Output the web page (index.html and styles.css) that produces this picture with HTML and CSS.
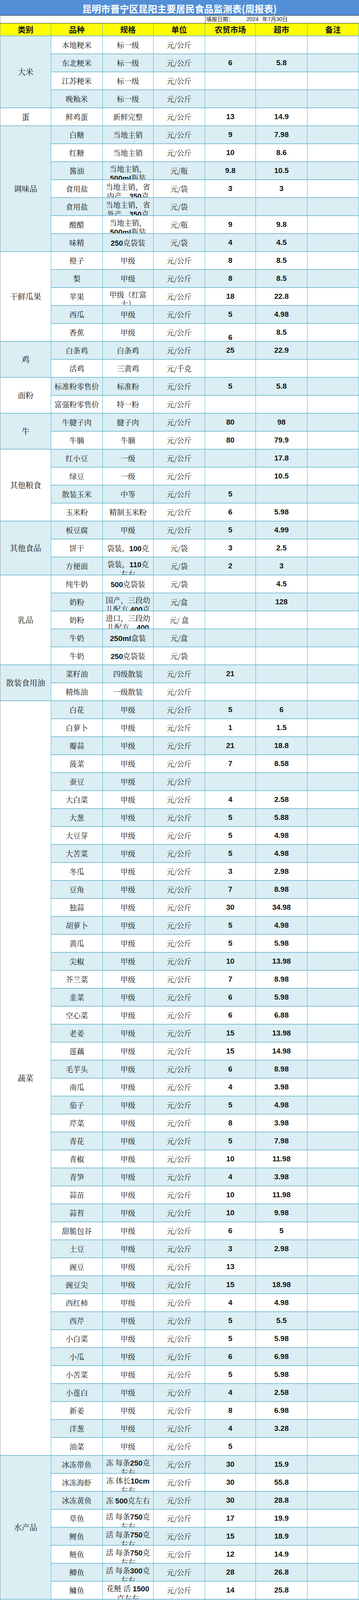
FILE: index.html
```html
<!DOCTYPE html>
<html lang="zh-CN">
<head>
<meta charset="utf-8">
<title>昆明市晋宁区昆阳主要居民食品监测表(周报表)</title>
<link rel="stylesheet" href="styles.css">
</head>
<body>
<div class="sheet">
  <div class="title">昆明市晋宁区昆阳主要居民食品监测表(周报表)</div>
  <div class="date">
    <div class="date-l"></div>
    <div class="date-r"><span>填报日期：</span><span class="yr">2024</span><span class="md">年7月30日</span></div>
  </div>
  <div class="g">
    <div class="r hd"><div>类别</div><div>品种</div><div>规格</div><div>单位</div><div>农贸市场</div><div>超市</div><div>备注</div></div>

    <div class="r w"><div class="k kb s4">大米</div><div>本地粳米</div><div>标一级</div><div>元/公斤</div><div class="n"></div><div class="n"></div><div></div></div>
    <div class="r b"><div>东北粳米</div><div>标一级</div><div>元/公斤</div><div class="n">6</div><div class="n">5.8</div><div></div></div>
    <div class="r w"><div>江苏粳米</div><div>标一级</div><div>元/公斤</div><div class="n"></div><div class="n"></div><div></div></div>
    <div class="r b"><div>晚籼米</div><div>标一级</div><div>元/公斤</div><div class="n"></div><div class="n"></div><div></div></div>

    <div class="r w"><div class="k kw s1">蛋</div><div>鲜鸡蛋</div><div>新鲜完整</div><div>元/公斤</div><div class="n">13</div><div class="n">14.9</div><div></div></div>

    <div class="r b"><div class="k kb s7">调味品</div><div>白糖</div><div>当地主销</div><div>元/公斤</div><div class="n">9</div><div class="n">7.98</div><div></div></div>
    <div class="r w"><div>红糖</div><div>当地主销</div><div>元/公斤</div><div class="n">10</div><div class="n">8.6</div><div></div></div>
    <div class="r b"><div>酱油</div><div class="t">当地主销，<br><b>500ml</b>瓶装</div><div>元/瓶</div><div class="n">9.8</div><div class="n">10.5</div><div></div></div>
    <div class="r w"><div>食用盐</div><div class="t">当地主销，省<br>内产，<b>350</b>克</div><div>元/袋</div><div class="n">3</div><div class="n">3</div><div></div></div>
    <div class="r b"><div>食用盐</div><div class="t">当地主销，省<br>外产，<b>350</b>克</div><div>元/袋</div><div class="n"></div><div class="n"></div><div></div></div>
    <div class="r w"><div>酸醋</div><div class="t">当地主销，<br><b>500ml</b>瓶装</div><div>元/瓶</div><div class="n">9</div><div class="n">9.8</div><div></div></div>
    <div class="r b"><div>味精</div><div><b>250</b>克袋装</div><div>元/袋</div><div class="n">4</div><div class="n">4.5</div><div></div></div>

    <div class="r w"><div class="k kw s5">干鲜瓜果</div><div>橙子</div><div>甲级</div><div>元/公斤</div><div class="n">8</div><div class="n">8.5</div><div></div></div>
    <div class="r b"><div>梨</div><div>甲级</div><div>元/公斤</div><div class="n">8</div><div class="n">8.5</div><div></div></div>
    <div class="r w"><div>苹果</div><div class="t">甲级（红富<br>士）</div><div>元/公斤</div><div class="n">18</div><div class="n">22.8</div><div></div></div>
    <div class="r b"><div>西瓜</div><div>甲级</div><div>元/公斤</div><div class="n">5</div><div class="n">4.98</div><div></div></div>
    <div class="r w"><div>香蕉</div><div>甲级</div><div>元/公斤</div><div class="n low">6</div><div class="n">8.5</div><div></div></div>

    <div class="r b"><div class="k kb s2">鸡</div><div>白条鸡</div><div>白条鸡</div><div>元/公斤</div><div class="n">25</div><div class="n">22.9</div><div></div></div>
    <div class="r w"><div>活鸡</div><div>三黄鸡</div><div>元/千克</div><div class="n"></div><div class="n"></div><div></div></div>

    <div class="r b"><div class="k kw s2">面粉</div><div>标准粉零售价</div><div>标准粉</div><div>元/公斤</div><div class="n">5</div><div class="n">5.8</div><div></div></div>
    <div class="r w"><div>富强粉零售价</div><div>特一粉</div><div>元/公斤</div><div class="n"></div><div class="n"></div><div></div></div>

    <div class="r b"><div class="k kb s2">牛</div><div>牛腱子肉</div><div>腱子肉</div><div>元/公斤</div><div class="n">80</div><div class="n">98</div><div></div></div>
    <div class="r w"><div>牛腩</div><div>牛腩</div><div>元/公斤</div><div class="n">80</div><div class="n">79.9</div><div></div></div>

    <div class="r b"><div class="k kw s4">其他粮食</div><div>红小豆</div><div>一级</div><div>元/公斤</div><div class="n"></div><div class="n">17.8</div><div></div></div>
    <div class="r w"><div>绿豆</div><div>一级</div><div>元/公斤</div><div class="n"></div><div class="n">10.5</div><div></div></div>
    <div class="r b"><div>散装玉米</div><div>中等</div><div>元/公斤</div><div class="n">5</div><div class="n"></div><div></div></div>
    <div class="r w"><div>玉米粉</div><div>精制玉米粉</div><div>元/公斤</div><div class="n">6</div><div class="n">5.98</div><div></div></div>

    <div class="r b"><div class="k kb s3">其他食品</div><div>板豆腐</div><div>甲级</div><div>元/公斤</div><div class="n">5</div><div class="n">4.99</div><div></div></div>
    <div class="r w"><div>饼干</div><div>袋装，<b>100</b>克</div><div>元/袋</div><div class="n">3</div><div class="n">2.5</div><div></div></div>
    <div class="r b"><div>方便面</div><div class="t">袋装，<b>110</b>克<br>左右</div><div>元/袋</div><div class="n">2</div><div class="n">3</div><div></div></div>

    <div class="r w"><div class="k kw s5">乳品</div><div>纯牛奶</div><div><b>500</b>克袋装</div><div>元/袋</div><div class="n"></div><div class="n">4.5</div><div></div></div>
    <div class="r b"><div>奶粉</div><div class="t">国产，三段幼<br>儿配方<b>,400</b>克</div><div>元/盒</div><div class="n"></div><div class="n">128</div><div></div></div>
    <div class="r w"><div>奶粉</div><div class="t">进口，三段幼<br>儿配方，<b>400</b><br>克</div><div>元/ 盒</div><div class="n"></div><div class="n"></div><div></div></div>
    <div class="r b"><div>牛奶</div><div><b>250ml</b>盒装</div><div>元/盒</div><div class="n"></div><div class="n"></div><div></div></div>
    <div class="r w"><div>牛奶</div><div><b>250</b>克袋装</div><div>元/袋</div><div class="n"></div><div class="n"></div><div></div></div>

    <div class="r b"><div class="k kb s2">散装食用油</div><div>菜籽油</div><div>四级散装</div><div>元/公斤</div><div class="n">21</div><div class="n"></div><div></div></div>
    <div class="r w"><div>精炼油</div><div>一级散装</div><div>元/公斤</div><div class="n"></div><div class="n"></div><div></div></div>

    <div class="r b"><div class="k kw s42">蔬菜</div><div>白花</div><div>甲级</div><div>元/公斤</div><div class="n">5</div><div class="n">6</div><div></div></div>
    <div class="r w"><div>白萝卜</div><div>甲级</div><div>元/公斤</div><div class="n">1</div><div class="n">1.5</div><div></div></div>
    <div class="r b"><div>瓣蒜</div><div>甲级</div><div>元/公斤</div><div class="n">21</div><div class="n">18.8</div><div></div></div>
    <div class="r w"><div>菠菜</div><div>甲级</div><div>元/公斤</div><div class="n">7</div><div class="n">8.58</div><div></div></div>
    <div class="r b"><div>蚕豆</div><div>甲级</div><div>元/公斤</div><div class="n"></div><div class="n"></div><div></div></div>
    <div class="r w"><div>大白菜</div><div>甲级</div><div>元/公斤</div><div class="n">4</div><div class="n">2.58</div><div></div></div>
    <div class="r b"><div>大葱</div><div>甲级</div><div>元/公斤</div><div class="n">5</div><div class="n">5.88</div><div></div></div>
    <div class="r w"><div>大豆芽</div><div>甲级</div><div>元/公斤</div><div class="n">5</div><div class="n">4.98</div><div></div></div>
    <div class="r b"><div>大苦菜</div><div>甲级</div><div>元/公斤</div><div class="n">5</div><div class="n">4.98</div><div></div></div>
    <div class="r w"><div>冬瓜</div><div>甲级</div><div>元/公斤</div><div class="n">3</div><div class="n">2.98</div><div></div></div>
    <div class="r b"><div>豆角</div><div>甲级</div><div>元/公斤</div><div class="n">7</div><div class="n">8.98</div><div></div></div>
    <div class="r w"><div>独蒜</div><div>甲级</div><div>元/公斤</div><div class="n">30</div><div class="n">34.98</div><div></div></div>
    <div class="r b"><div>胡萝卜</div><div>甲级</div><div>元/公斤</div><div class="n">5</div><div class="n">4.98</div><div></div></div>
    <div class="r w"><div>黄瓜</div><div>甲级</div><div>元/公斤</div><div class="n">5</div><div class="n">5.98</div><div></div></div>
    <div class="r b"><div>尖椒</div><div>甲级</div><div>元/公斤</div><div class="n">10</div><div class="n">13.98</div><div></div></div>
    <div class="r w"><div>芥兰菜</div><div>甲级</div><div>元/公斤</div><div class="n">7</div><div class="n">8.98</div><div></div></div>
    <div class="r b"><div>韭菜</div><div>甲级</div><div>元/公斤</div><div class="n">6</div><div class="n">5.98</div><div></div></div>
    <div class="r w"><div>空心菜</div><div>甲级</div><div>元/公斤</div><div class="n">6</div><div class="n">6.88</div><div></div></div>
    <div class="r b"><div>老姜</div><div>甲级</div><div>元/公斤</div><div class="n">15</div><div class="n">13.98</div><div></div></div>
    <div class="r w"><div>莲藕</div><div>甲级</div><div>元/公斤</div><div class="n">15</div><div class="n">14.98</div><div></div></div>
    <div class="r b"><div>毛芋头</div><div>甲级</div><div>元/公斤</div><div class="n">6</div><div class="n">8.98</div><div></div></div>
    <div class="r w"><div>南瓜</div><div>甲级</div><div>元/公斤</div><div class="n">4</div><div class="n">3.98</div><div></div></div>
    <div class="r b"><div>茄子</div><div>甲级</div><div>元/公斤</div><div class="n">5</div><div class="n">4.98</div><div></div></div>
    <div class="r w"><div>芹菜</div><div>甲级</div><div>元/公斤</div><div class="n">8</div><div class="n">3.98</div><div></div></div>
    <div class="r b"><div>青花</div><div>甲级</div><div>元/公斤</div><div class="n">5</div><div class="n">7.98</div><div></div></div>
    <div class="r w"><div>青椒</div><div>甲级</div><div>元/公斤</div><div class="n">10</div><div class="n">11.98</div><div></div></div>
    <div class="r b"><div>青笋</div><div>甲级</div><div>元/公斤</div><div class="n">4</div><div class="n">3.98</div><div></div></div>
    <div class="r w"><div>蒜苗</div><div>甲级</div><div>元/公斤</div><div class="n">10</div><div class="n">11.98</div><div></div></div>
    <div class="r b"><div>蒜苔</div><div>甲级</div><div>元/公斤</div><div class="n">10</div><div class="n">9.98</div><div></div></div>
    <div class="r w"><div>甜脆包谷</div><div>甲级</div><div>元/公斤</div><div class="n">6</div><div class="n">5</div><div></div></div>
    <div class="r b"><div>土豆</div><div>甲级</div><div>元/公斤</div><div class="n">3</div><div class="n">2.98</div><div></div></div>
    <div class="r w"><div>豌豆</div><div>甲级</div><div>元/公斤</div><div class="n">13</div><div class="n"></div><div></div></div>
    <div class="r b"><div>豌豆尖</div><div>甲级</div><div>元/公斤</div><div class="n">15</div><div class="n">18.98</div><div></div></div>
    <div class="r w"><div>西红柿</div><div>甲级</div><div>元/公斤</div><div class="n">4</div><div class="n">4.98</div><div></div></div>
    <div class="r b"><div>西芹</div><div>甲级</div><div>元/公斤</div><div class="n">5</div><div class="n">5.5</div><div></div></div>
    <div class="r w"><div>小白菜</div><div>甲级</div><div>元/公斤</div><div class="n">5</div><div class="n">5.98</div><div></div></div>
    <div class="r b"><div>小瓜</div><div>甲级</div><div>元/公斤</div><div class="n">6</div><div class="n">6.98</div><div></div></div>
    <div class="r w"><div>小苦菜</div><div>甲级</div><div>元/公斤</div><div class="n">5</div><div class="n">5.98</div><div></div></div>
    <div class="r b"><div>小莲白</div><div>甲级</div><div>元/公斤</div><div class="n">4</div><div class="n">2.58</div><div></div></div>
    <div class="r w"><div>新姜</div><div>甲级</div><div>元/公斤</div><div class="n">8</div><div class="n">6.98</div><div></div></div>
    <div class="r b"><div>洋葱</div><div>甲级</div><div>元/公斤</div><div class="n">4</div><div class="n">3.28</div><div></div></div>
    <div class="r w"><div>油菜</div><div>甲级</div><div>元/公斤</div><div class="n">5</div><div class="n"></div><div></div></div>

    <div class="r b"><div class="k kb s8">水产品</div><div>冰冻带鱼</div><div class="t">冻 每条<b>250</b>克<br>左右</div><div>元/公斤</div><div class="n">30</div><div class="n">15.9</div><div></div></div>
    <div class="r w"><div>冰冻海虾</div><div class="t">冻 体长<b>10cm</b><br>左右</div><div>元/公斤</div><div class="n">30</div><div class="n">55.8</div><div></div></div>
    <div class="r b"><div>冰冻黄鱼</div><div>冻 <b>500</b>克左右</div><div>元/公斤</div><div class="n">30</div><div class="n">28.8</div><div></div></div>
    <div class="r w"><div>草鱼</div><div class="t">活 每条<b>750</b>克<br>左右</div><div>元/公斤</div><div class="n">17</div><div class="n">19.9</div><div></div></div>
    <div class="r b"><div>鲤鱼</div><div class="t">活 每条<b>750</b>克<br>左右</div><div>元/公斤</div><div class="n">15</div><div class="n">18.9</div><div></div></div>
    <div class="r w"><div>鲢鱼</div><div class="t">活 每条<b>750</b>克<br>左右</div><div>元/公斤</div><div class="n">12</div><div class="n">14.9</div><div></div></div>
    <div class="r b"><div>鲫鱼</div><div class="t">活 每条<b>300</b>克<br>左右</div><div>元/公斤</div><div class="n">28</div><div class="n">26.8</div><div></div></div>
    <div class="r w"><div>鳙鱼</div><div class="t">花鲢 活 <b>1500</b><br>克左右</div><div>元/公斤</div><div class="n">14</div><div class="n">25.8</div><div></div></div>

    <div class="r b"><div class="k kw s6">桶装食用油</div><div>大豆油</div><div><b>5</b>升桶装</div><div>元/桶</div><div class="n"></div><div class="n"></div><div></div></div>
    <div class="r w"><div class="t">福临门食用调<br>和油</div><div><b>5</b>升桶装</div><div>元/桶</div><div class="n"></div><div class="n">69.9</div><div></div></div>
    <div class="r b"><div>金龙鱼菜籽油</div><div><b>5</b>升桶装</div><div>元/桶</div><div class="n">70</div><div class="n">79.9</div><div></div></div>
    <div class="r w"><div class="t">金龙鱼食用调<br>和油</div><div><b>5</b>升桶装</div><div>元/桶</div><div class="n">70</div><div class="n">72.9</div><div></div></div>
    <div class="r b"><div class="t">鲁花<b>5S</b>压榨一<br>级花生油</div><div><b>5</b>升桶装</div><div>元/桶</div><div class="n"></div><div class="n">169.9</div><div></div></div>
    <div class="r w"><div class="t">香满园大豆调<br>和油</div><div><b>5</b>升桶装</div><div>元/桶</div><div class="n">53</div><div class="n">59.9</div><div></div></div>

    <div class="r b"><div class="k kb s2">烟酒饮料</div><div>矿泉水</div><div><b>550ml</b>瓶装</div><div>元/瓶</div><div class="n">2</div><div class="n">2</div><div></div></div>
    <div class="r w"><div>碳酸饮料</div><div><b>2.5L</b>瓶装</div><div>元/瓶</div><div class="n">6.5</div><div class="n">6.5</div><div></div></div>

    <div class="r b"><div class="k kw s2">羊</div><div>带骨羊肉</div><div>新鲜带骨</div><div>元/公斤</div><div class="n">65</div><div class="n"></div><div></div></div>
    <div class="r w"><div>去骨羊肉</div><div>新鲜去骨</div><div>元/公斤</div><div class="n"></div><div class="n"></div><div></div></div>

    <div class="r b"><div class="k kb s5">猪</div><div>猪带皮后腿肉</div><div>带皮后腿</div><div>元/公斤</div><div class="n">30</div><div class="n">25</div><div></div></div>
    <div class="r w"><div>猪精瘦肉</div><div>精瘦肉</div><div>元/公斤</div><div class="n">40</div><div class="n">32</div><div></div></div>
    <div class="r b"><div>猪肋排</div><div>肋排</div><div>元/公斤</div><div class="n">32</div><div class="n">32</div><div></div></div>
    <div class="r w"><div>猪肋条肉</div><div>肋条（五花）</div><div>元/公斤</div><div class="n">28</div><div class="n">24.8</div><div></div></div>
    <div class="r b"><div>猪前腿肉</div><div>前腿</div><div>元/公斤</div><div class="n">28</div><div class="n">22.8</div><div></div></div>
  </div>
  <div class="foot">
    <span class="note">备注：以上价格监测商品属市场调节价，仅供参考，不做其它使用。</span>
    <span class="fc"></span>
    <span class="fc"></span>
    <span class="fc"></span>
  </div>
</div>
</body>
</html>
```

FILE: styles.css
```css
* {
  box-sizing: border-box;
}

html,
body {
  margin: 0;
  padding: 0;
}

body {
  background: #ffffff;
  color: #111111;
  font-family: "Noto Serif CJK SC", "Noto Sans CJK SC", sans-serif;
}

.sheet {
  width: 919px;
}

.title {
  height: 40px;
  padding-top: 4px;
  background: #538fd7;
  border-bottom: 1px solid #2a2a2a;
  color: #ffffff;
  font-family: "Noto Sans CJK SC", sans-serif;
  font-size: 24px;
  font-weight: 700;
  line-height: 35px;
  text-align: center;
  white-space: nowrap;
  overflow: hidden;
}

.date {
  display: flex;
  height: 20px;
  border-left: 1px solid #9a9a9a;
  border-bottom: 1px solid #2a2a2a;
}

.date-l {
  width: 524px;
}

.date-r {
  flex: 1;
  display: flex;
  align-items: center;
  padding-left: 2px;
  border-left: 1px solid #2a2a2a;
  font-family: "Liberation Sans", "Noto Sans CJK SC", sans-serif;
  font-size: 14px;
  line-height: 19px;
  color: #222222;
  overflow: hidden;
}

.date-r .yr {
  margin-left: 33px;
}

.date-r .md {
  margin-left: 9px;
}

/* grid table */
.g {
  display: grid;
  width: 919px;
  grid-template-columns: 130px 132px 130px 132px 130px 132px 132px;
  grid-template-rows: 33px;
  grid-auto-rows: 46px;
  border-left: 1px solid #9a9a9a;
}

.r {
  display: contents;
}

.r > div {
  min-width: 0;
  overflow: hidden;
  border-right: 1px solid #5aaec8;
  border-bottom: 2px solid #80c1d4;
  text-align: center;
  white-space: nowrap;
  font-size: 19px;
  line-height: 44px;
  font-weight: 400;
}

.r.w > div {
  background: #ffffff;
}

.r.b > div {
  background: #daeef4;
}

.r.hd > div {
  background: #ffff00;
  font-family: "Noto Sans CJK SC", sans-serif;
  font-size: 20px;
  font-weight: 700;
  line-height: 31px;
  color: #111111;
}

.r > div.k {
  grid-column: 1;
  display: flex;
  align-items: center;
  justify-content: center;
  font-size: 20px;
  line-height: 24px;
}

.r > div.kw {
  background: #ffffff;
}

.r > div.kb {
  background: #daeef4;
}

.s1 { grid-row: span 1; }
.s2 { grid-row: span 2; }
.s3 { grid-row: span 3; }
.s4 { grid-row: span 4; }
.s5 { grid-row: span 5; }
.s6 { grid-row: span 6; }
.s7 { grid-row: span 7; }
.s8 { grid-row: span 8; }
.s42 { grid-row: span 42; }

.r > div.n {
  font-family: "Liberation Sans", Arial, sans-serif;
  font-weight: 700;
}

.r > div.low {
  line-height: 23px;
  padding-top: 23px;
}

.r > div.t {
  line-height: 23px;
  padding-top: 5px;
}

.r b {
  font-family: "Liberation Sans", Arial, sans-serif;
  font-weight: 700;
}

.foot {
  display: grid;
  width: 919px;
  grid-template-columns: 525px 130px 132px 131px;
  height: 26px;
  border-left: 1px solid #9a9a9a;
  border-bottom: 1px solid #dddddd;
  overflow: hidden;
}

.note {
  padding-left: 3px;
  font-family: "Noto Sans CJK SC", sans-serif;
  font-size: 15.5px;
  line-height: 25px;
  color: #333333;
  white-space: nowrap;
}

.fc {
  border-left: 1px solid #e4e4e4;
}
```
